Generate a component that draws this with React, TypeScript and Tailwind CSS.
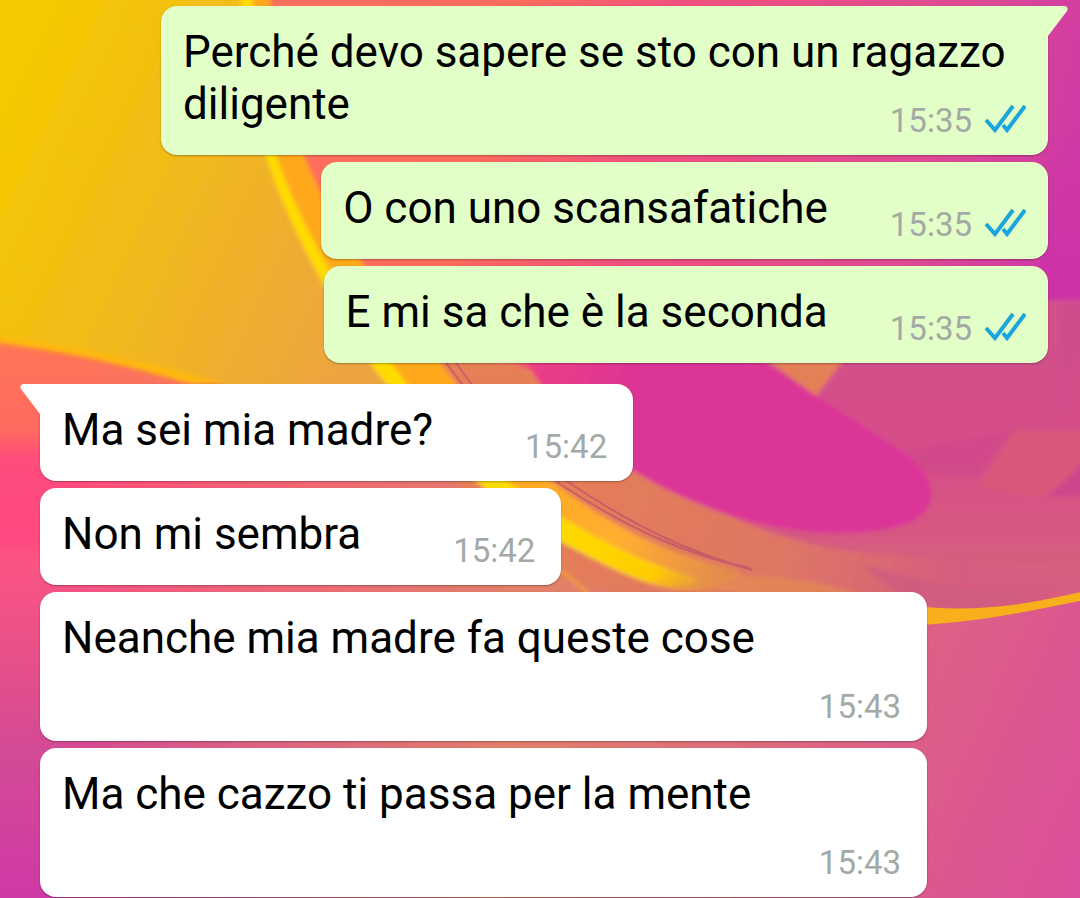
type Message = {
  text: string
  time: string
  mine?: boolean
  first?: boolean
}

const sent: Message[] = [
  { text: 'Perché devo sapere se sto con un ragazzo diligente', time: '15:35', mine: true, first: true },
  { text: 'O con uno scansafatiche', time: '15:35', mine: true },
  { text: 'E mi sa che è la seconda', time: '15:35', mine: true },
]

const received: Message[] = [
  { text: 'Ma sei mia madre?', time: '15:42', first: true },
  { text: 'Non mi sembra', time: '15:42' },
  { text: 'Neanche mia madre fa queste cose', time: '15:43' },
  { text: 'Ma che cazzo ti passa per la mente', time: '15:43' },
]

function Wallpaper() {
  return (
    <svg
      className="absolute inset-0 h-full w-full"
      viewBox="0 0 1080 898"
      preserveAspectRatio="none"
      aria-hidden="true"
    >
      <defs>
        <linearGradient id="gold" gradientUnits="userSpaceOnUse" x1="0" y1="120" x2="380" y2="300">
          <stop offset="0" stopColor="#f5c800" />
          <stop offset="0.4" stopColor="#f2bb19" />
          <stop offset="1" stopColor="#eca441" />
        </linearGradient>
        <linearGradient id="left" x1="0" y1="335" x2="0" y2="898" gradientUnits="userSpaceOnUse">
          <stop offset="0" stopColor="#ff7656" />
          <stop offset="0.17" stopColor="#ff6a60" />
          <stop offset="0.22" stopColor="#ff4c7c" />
          <stop offset="0.36" stopColor="#ff4880" />
          <stop offset="0.4" stopColor="#fb5484" />
          <stop offset="0.55" stopColor="#ea5088" />
          <stop offset="0.75" stopColor="#d24a96" />
          <stop offset="1" stopColor="#cf39a6" />
        </linearGradient>
        <linearGradient id="warm" x1="60" y1="0" x2="520" y2="0" gradientUnits="userSpaceOnUse">
          <stop offset="0" stopColor="#e8806a" stopOpacity="0" />
          <stop offset="1" stopColor="#e2806a" />
        </linearGradient>
        <linearGradient id="top" x1="260" y1="0" x2="1060" y2="200" gradientUnits="userSpaceOnUse">
          <stop offset="0" stopColor="#ff6f5e" />
          <stop offset="0.3" stopColor="#ff6c5c" />
          <stop offset="0.5" stopColor="#f0507e" />
          <stop offset="0.85" stopColor="#dc4a94" />
          <stop offset="1" stopColor="#d03aa4" />
        </linearGradient>
        <linearGradient id="side" x1="0" y1="300" x2="0" y2="620" gradientUnits="userSpaceOnUse">
          <stop offset="0" stopColor="#d2508c" />
          <stop offset="0.5" stopColor="#d54e88" />
          <stop offset="1" stopColor="#d8667a" />
        </linearGradient>
        <linearGradient id="corner" x1="0" y1="120" x2="0" y2="300" gradientUnits="userSpaceOnUse">
          <stop offset="0" stopColor="#cc30a8" stopOpacity="0" />
          <stop offset="1" stopColor="#cc30a8" stopOpacity="0.8" />
        </linearGradient>
        <linearGradient id="low" x1="560" y1="620" x2="1080" y2="860" gradientUnits="userSpaceOnUse">
          <stop offset="0" stopColor="#e2806a" />
          <stop offset="0.6" stopColor="#dd6086" />
          <stop offset="1" stopColor="#da4f99" />
        </linearGradient>
        <linearGradient id="band" x1="520" y1="480" x2="960" y2="600" gradientUnits="userSpaceOnUse">
          <stop offset="0" stopColor="#e67f56" />
          <stop offset="0.6" stopColor="#df7664" />
          <stop offset="1" stopColor="#d65c80" />
        </linearGradient>
        <linearGradient id="amber" x1="480" y1="450" x2="720" y2="590" gradientUnits="userSpaceOnUse">
          <stop offset="0" stopColor="#ffa81c" />
          <stop offset="0.6" stopColor="#ffae30" />
          <stop offset="1" stopColor="#e28a50" />
        </linearGradient>
        <linearGradient id="yellow" x1="560" y1="500" x2="730" y2="600" gradientUnits="userSpaceOnUse">
          <stop offset="0" stopColor="#ffdc00" />
          <stop offset="0.6" stopColor="#ffcc00" />
          <stop offset="1" stopColor="#e69a44" stopOpacity="0" />
        </linearGradient>
        <linearGradient id="magenta" x1="520" y1="360" x2="640" y2="390" gradientUnits="userSpaceOnUse">
          <stop offset="0" stopColor="#ec4180" />
          <stop offset="1" stopColor="#dc3498" />
        </linearGradient>
        <filter id="soft" x="-5%" y="-5%" width="110%" height="110%">
          <feGaussianBlur stdDeviation="2" />
        </filter>
      </defs>
      <rect width="1080" height="898" fill="url(#left)" />
      <rect x="60" y="340" width="1020" height="558" fill="url(#warm)" />
      <path d="M240 0H1080V370H380Z" fill="url(#top)" />
      <path d="M1040 120H1080V300H1040Z" fill="url(#corner)" />
      <g filter="url(#soft)">
        <path d="M500 300H1100V660H760Z" fill="url(#side)" />
        <path d="M1062 300H1100L1066 400L1050 430Z" fill="#c9458f" opacity="0.2" />
        <path d="M1100 430H1015L978 486L1040 498L1100 455Z" fill="#d9597a" />
        <path d="M1100 445L1050 496H1100Z" fill="#c9428f" opacity="0.7" />
        <path d="M1010 432L976 476L925 474L905 450Z" fill="#cb4290" opacity="0.3" />
        <path d="M-10 -10H240C248 70 255 115 266 155C285 220 330 300 370 363L388 384C420 450 400 430 388 450L215 384C150 368 90 350 -10 338Z" fill="url(#gold)" />
        <path d="M-10 335C90 350 150 362 225 384L190 384C130 366 70 352 -10 342Z" fill="#ffb80c" />
        <path d="M360 340C500 350 530 360 560 400C620 470 760 545 860 552C960 558 1020 575 1090 572V600C1000 620 930 612 860 612L640 640C520 560 430 470 360 340Z" fill="url(#band)" />
        <path d="M500 560C640 610 740 610 900 626C980 622 1040 610 1090 598V910H500Z" fill="url(#low)" />
        <path d="M240 -5H270C278 70 286 115 304 155C330 220 370 280 438 360C480 415 520 460 566 492C620 530 670 555 730 568C760 576 720 588 690 584C630 576 590 550 556 532C490 490 430 440 370 360C330 300 285 220 266 155C255 115 248 70 240 -5Z" fill="url(#amber)" />
        <path d="M240 -5H252C258 70 264 115 276 155C298 220 340 295 392 364C440 430 500 480 556 514C610 546 660 572 730 586C740 592 690 594 660 586C620 576 590 556 556 540C480 495 420 430 370 363C330 300 285 220 266 155C255 115 248 70 240 -5Z" fill="url(#yellow)" />
        <path d="M520 350C560 430 632 480 720 512C800 540 880 538 915 520C945 500 930 470 900 450L764 362Z" fill="url(#magenta)" />
        <path d="M764 358H845L816 396Z" fill="#e57f58" />
        <path d="M864 566C890 590 910 604 960 606C1000 606 1030 600 1050 592C990 596 930 582 864 566Z" fill="#d05d7e" />
        <path d="M700 576C780 574 820 580 880 600H760C730 592 710 586 690 586Z" fill="#e5904e" opacity="0.6" />
        <path d="M556 566L596 600" stroke="#f0a040" strokeWidth="3" />
      </g>
      <path d="M900 605C980 614 1030 604 1090 590V599C1020 613 970 624 900 626Z" fill="#f7b01c" />
      <path
        d="M444 360C480 410 520 455 560 484C630 530 690 556 750 568M454 360C490 412 530 455 568 482C640 530 690 552 752 570"
        fill="none"
        stroke="#c0506e"
        strokeWidth="2"
        opacity="0.7"
      />
    </svg>
  )
}

function Ticks() {
  return (
    <svg className="h-7 w-11" viewBox="0 0 44 28" fill="none" stroke="#1ba5dd" strokeWidth="4" role="img" aria-label="Letto">
      <path d="M4 15L13 25L31 1M21 20L25 25L43 1" />
    </svg>
  )
}

function Bubble({ text, time, mine, first }: Message) {
  return (
    <li
      className={`relative flow-root max-w-[88%] rounded-2xl pt-5 pb-2 pl-[22px] shadow-[0_1px_2px_rgba(0,0,0,0.3)] ${
        mine ? 'self-end bg-[#e1ffc7] pr-[22px]' : 'self-start bg-white pr-[26px]'
      } ${first ? (mine ? 'rounded-tr-none' : 'rounded-tl-none') : ''}`}
    >
      {first && (
        <svg
          className={`absolute top-0 h-[30px] w-[21px] ${mine ? 'left-full -ml-px' : 'right-full -mr-px -scale-x-100'}`}
          viewBox="0 0 21 30"
          aria-hidden="true"
        >
          <path d="M0 0H18Q22 1 20 5L1 30H0Z" fill={mine ? '#e1ffc7' : '#ffffff'} />
        </svg>
      )}
      <span>{text}</span>
      <span
        className={`float-right flex h-[69px] items-end gap-[10px] text-[33px] text-[#a3aaa6] ${mine ? 'pl-[62px]' : 'pl-[92px]'}`}
      >
        <time>{time}</time>
        {mine && (
          <span className="mb-[14px]">
            <Ticks />
          </span>
        )}
      </span>
    </li>
  )
}

export default function App() {
  return (
    <main className="relative min-h-screen overflow-hidden font-['Roboto',sans-serif] text-[44px] leading-[52px] text-black">
      <Wallpaper />
      <div className="relative flex flex-col gap-[21px] pt-[6px] pr-8 pl-10">
        <ul className="flex flex-col gap-[7px]">
          {sent.map((m) => (
            <Bubble key={m.text} {...m} />
          ))}
        </ul>
        <ul className="flex flex-col gap-[7px]">
          {received.map((m) => (
            <Bubble key={m.text} {...m} />
          ))}
        </ul>
      </div>
    </main>
  )
}
